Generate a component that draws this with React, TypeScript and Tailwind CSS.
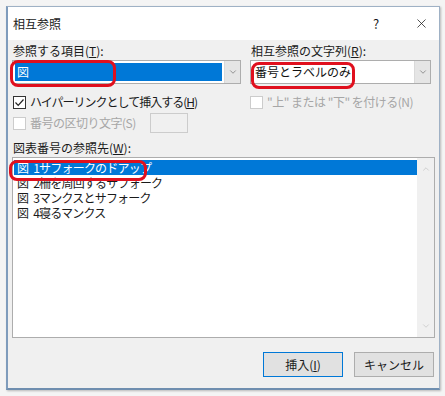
import { ChevronDown, ChevronUp, X } from 'lucide-react';

const font = "font-['Noto_Sans_CJK_JP','Noto_Sans',sans-serif]";

const items = [
  ['1', 'サフォークのドアップ'],
  ['2', '柵を周回するサフォーク'],
  ['3', 'マンクスとサフォーク'],
  ['4', '寝るマンクス'],
];

const Check = ({ checked, disabled }: { checked?: boolean; disabled?: boolean }) => (
  <span
    className={`flex h-[13px] w-[13px] shrink-0 items-center justify-center border bg-white ${
      disabled ? 'border-[#cccccc]' : 'border-[#333333]'
    }`}
  >
    {checked && (
      <svg width="11" height="11" viewBox="0 0 11 11">
        <path d="M1.5 5.5 L4.2 8.3 L9.5 2.5" fill="none" stroke="#222" strokeWidth="1.2" />
      </svg>
    )}
  </span>
);

const Combo = ({ children, selected }: { children: React.ReactNode; selected?: boolean }) => (
  <div className="flex h-[24px] border border-[#adadad] bg-white">
    <div className="flex flex-1 items-center p-[2px]">
      <div
        className={`flex h-full flex-1 items-center px-[2px] ${
          selected ? 'bg-[#0078d7] text-white' : 'text-[#111]'
        }`}
      >
        {children}
      </div>
    </div>
    <div className="flex w-[16px] items-center justify-center border-l border-[#dadada] bg-[#e5e5e5]">
      <ChevronDown size={10} strokeWidth={1.5} className="text-[#606060]" />
    </div>
  </div>
);

export default function App() {
  return (
    <div className={`h-[396px] w-[445px] bg-[#f4f4f4] pl-[6px] pt-[6px] text-[12px] ${font}`}>
      <div className="relative flex h-[384px] w-[434px] flex-col border border-[#9fb1c5] border-b-[2px] border-l-[2px] border-b-[#6f8eaf] border-l-[#7f9cbc] bg-[#f0f0f0] shadow-[1px_1px_2px_rgba(0,0,0,0.25)]">
        {/* title bar */}
        <div className="flex h-[33px] items-center bg-white pl-[5px] text-[#1a1a1a]">
          <span className="flex-1">相互参照</span>
          <span className="w-[20px] text-center text-[13px]">?</span>
          <span className="ml-[25px] mr-[8px] flex w-[20px] justify-center">
            <X size={15} strokeWidth={1.2} />
          </span>
        </div>

        <div className="flex flex-1 flex-col px-[4px] text-[#1a1a1a]">
          <div className="flex gap-[9px] pt-[2px]">
            <div className="w-[229px]">
              <div className="h-[18px] pl-[1px]">参照する項目(<u>T</u>):</div>
              <Combo selected>図</Combo>
            </div>
            <div className="w-[181px]">
              <div className="h-[18px] pl-[1px]">相互参照の文字列(<u>R</u>):</div>
              <Combo>番号とラベルのみ</Combo>
            </div>
          </div>

          <div className="mt-[9px] flex gap-[9px]">
            <label className="flex w-[229px] items-center gap-[4px] pl-[1px]">
              <Check checked />
              <span className="tracking-[-1px]">ハイパーリンクとして挿入する(<u>H</u>)</span>
            </label>
            <label className="flex items-center gap-[4px] text-[#a6a6a6]">
              <Check disabled />
              <span className="tracking-[-0.5px]">"上" または "下" を付ける(N)</span>
            </label>
          </div>

          <div className="mt-[2px] flex items-center gap-[4px] pl-[1px] text-[#a6a6a6]">
            <Check disabled />
            <span className="w-[116px] tracking-[-0.5px]">番号の区切り文字(S)</span>
            <span className="h-[20px] w-[38px] border border-[#cccccc] bg-[#f0f0f0]" />
          </div>

          <div className="mt-[6px] h-[18px] pl-[1px]">図表番号の参照先(<u>W</u>):</div>
          <div className="flex h-[181px] border border-[#adadad] bg-white">
            <div className="flex-1 pl-[1px] pt-[2px]">
              {items.map(([n, t], i) => (
                <div
                  key={n}
                  className={`flex h-[15px] items-center whitespace-nowrap pl-[3px] leading-[15px] tracking-[-0.8px] ${
                    i === 0 ? 'bg-[#0078d7] text-white' : ''
                  }`}
                >
                  <span>図</span>
                  <span className="ml-[5px]">{n}</span>
                  <span>{t}</span>
                </div>
              ))}
            </div>
            <div className="flex w-[17px] flex-col items-center justify-between bg-[#f0f0f0] py-[6px]">
              <ChevronUp size={10} strokeWidth={1.5} className="text-[#bdbdbd]" />
              <ChevronDown size={10} strokeWidth={1.5} className="text-[#bdbdbd]" />
            </div>
          </div>

          <div className="mt-[14px] flex justify-end gap-[11px] pr-[1px]">
            <button className="h-[25px] w-[80px] border border-[#0078d7] bg-[#e1e1e1] text-[#1a1a1a]">
              挿入(<u>I</u>)
            </button>
            <button className="h-[25px] w-[80px] border border-[#adadad] bg-[#e1e1e1] text-[#1a1a1a]">
              キャンセル
            </button>
          </div>
        </div>

        {/* red annotation marks */}
        <div className="absolute left-[2px] top-[53px] h-[27px] w-[106px] rounded-[8px] border-[3px] border-[#e0101e]" />
        <div className="absolute left-[243px] top-[55px] h-[27px] w-[104px] rounded-[8px] border-[3px] border-[#e0101e]" />
        <div className="absolute left-[1px] top-[153px] h-[21px] w-[138px] rounded-[8px] border-[3px] border-[#e0101e]" />
      </div>
    </div>
  );
}
